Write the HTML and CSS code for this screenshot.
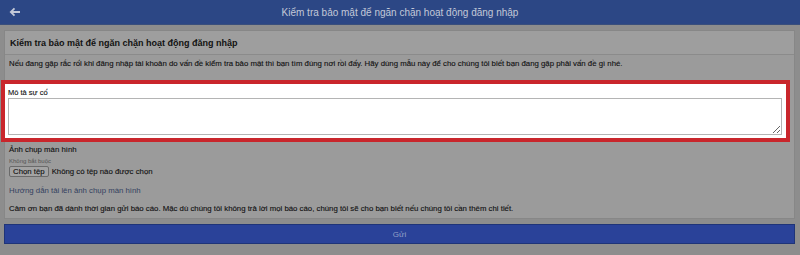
FILE: index.html
```html
<!DOCTYPE html>
<html lang="vi">
<head>
    <meta charset="UTF-8">
    <title>Kiểm tra bảo mật</title>
    <link rel="stylesheet" href="styles.css">
</head>
<body>
    <header class="topbar">
        <svg class="back" width="12" height="10" viewBox="0 0 12 10">
            <path d="M11 5H2M5.5 1.3L1.8 5l3.7 3.7" fill="none" stroke="#c3c9d8" stroke-width="1.8"/>
        </svg>
        <h1 class="topbar-title">Kiểm tra bảo mật để ngăn chặn hoạt động đăng nhập</h1>
    </header>

    <main class="page">
        <section class="panel">
            <h2 class="panel-title">Kiểm tra bảo mật để ngăn chặn hoạt động đăng nhập</h2>
            <div class="panel-body">
                <p class="intro">Nếu đang gặp rắc rối khi đăng nhập tài khoản do vấn đề kiểm tra bảo mật thì bạn tìm đúng nơi rồi đấy. Hãy dùng mẫu này để cho chúng tôi biết bạn đang gặp phải vấn đề gì nhé.</p>

                <div class="highlight">
                    <label class="field-label" for="issue">Mô tả sự cố</label>
                    <textarea id="issue" class="issue"></textarea>
                </div>

                <div class="upload">
                    <div class="upload-title">Ảnh chụp màn hình</div>
                    <div class="upload-hint">Không bắt buộc</div>
                    <div class="file-row">
                        <span class="file-btn">Chọn tệp</span>
                        <span>Không có tệp nào được chọn</span>
                    </div>
                    <a class="guide" href="#">Hướng dẫn tải lên ảnh chụp màn hình</a>
                </div>

                <p class="thanks">Cảm ơn bạn đã dành thời gian gửi báo cáo. Mặc dù chúng tôi không trả lời mọi báo cáo, chúng tôi sẽ cho bạn biết nếu chúng tôi cần thêm chi tiết.</p>
            </div>
        </section>

        <button class="submit">Gửi</button>
    </main>
</body>
</html>
```

FILE: styles.css
```css
* {
    margin: 0;
    padding: 0;
    box-sizing: border-box;
}

body {
    font-family: "Liberation Sans", Arial, sans-serif;
    background: #8d8d8d;
    color: #111;
    width: 800px;
    height: 255px;
    overflow: hidden;
}

.topbar {
    height: 25px;
    background: #2c4785;
    border-bottom: 1px solid #3a4f7c;
    display: flex;
    align-items: center;
    justify-content: center;
    position: relative;
}

.back {
    position: absolute;
    left: 9px;
    top: 7px;
}

.topbar-title {
    font-size: 10px;
    font-weight: normal;
    color: #c3c9d8;
}

.page {
    padding: 5px 5px 0 4px;
}

.panel {
    background: #9b9b9b;
    border: 1px solid #878787;
}

.panel-title {
    font-size: 9px;
    line-height: 11px;
    font-weight: bold;
    color: #111;
    padding: 7px 5px 5px;
    border-bottom: 1px solid #8b8b8b;
    background: #9e9e9e;
    height: 24px;
}

.panel-body {
    padding: 4px 0 4px;
    font-size: 7.8px;
    line-height: 10px;
    -webkit-text-stroke: 0.12px #111;
}

.intro {
    padding: 0 4px;
}

.highlight {
    margin: 11px 4px 0 -4px;
    background: #fff;
    border: 4px solid #c9262c;
    padding: 4px 4px 3px 3px;
    display: flex;
    flex-direction: column;
}

.field-label {
    font-size: 7.5px;
    line-height: 10px;
}

.issue {
    height: 37px;
    border: 1px solid #b4b4b4;
    resize: vertical;
    background: #fff;
}

.upload {
    padding: 3px 4px 0;
}

.upload-title {
    line-height: 10px;
}

.upload-hint {
    font-size: 6px;
    line-height: 8px;
    margin-top: 2px;
    color: #555;
    -webkit-text-stroke: 0;
}

.file-row {
    display: flex;
    align-items: center;
    gap: 3px;
    margin-top: 1px;
    line-height: 9px;
}

.file-btn {
    border: 1px solid #6a6a6a;
    border-radius: 2px;
    background: #a3a3a3;
    padding: 0 3px;
}

.guide {
    display: block;
    margin-top: 9px;
    color: #33415f;
    -webkit-text-stroke: 0;
    text-decoration: none;
    line-height: 10px;
}

.thanks {
    padding: 8px 4px 0;
}

.submit {
    display: block;
    width: 100%;
    margin-top: 5px;
    height: 20px;
    border: 1px solid #1f3478;
    background: #2a4299;
    color: #93a0c8;
    font-family: inherit;
    font-size: 8px;
}
```
